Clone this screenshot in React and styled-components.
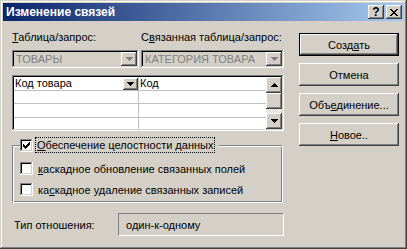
import React from 'react';
import styled, { createGlobalStyle, css } from 'styled-components';

const GlobalStyle = createGlobalStyle`
  html, body {
    margin: 0;
    padding: 0;
    background: #d4d0c8;
  }
  body {
    font-family: "Liberation Sans", Arial, sans-serif;
    font-size: 11px;
    color: #000;
  }
`;

const raised = css`
  background: #d4d0c8;
  box-shadow: inset -1px -1px #404040, inset 1px 1px #fff, inset -2px -2px #808080, inset 2px 2px #d4d0c8;
`;

const sunken = css`
  box-shadow: inset -1px -1px #fff, inset 1px 1px #808080, inset -2px -2px #d4d0c8, inset 2px 2px #000;
`;

const Window = styled.div`
  width: 407px;
  height: 249px;
  box-sizing: border-box;
  padding: 3px;
  background: #d4d0c8;
  box-shadow: inset -1px -1px #404040, inset 1px 1px #d4d0c8, inset -2px -2px #808080, inset 2px 2px #fff;
  display: flex;
  flex-direction: column;
`;

const TitleBar = styled.div`
  height: 18px;
  display: flex;
  align-items: center;
  padding: 0 2px;
  background: linear-gradient(to right, #0a246a, #a6caf0);
`;

const Title = styled.span`
  flex: 1;
  color: #fff;
  font-weight: bold;
  font-size: 12px;
  padding-left: 1px;
`;

const CaptionButtons = styled.div`
  display: flex;
  gap: 2px;
`;

const CaptionButton = styled.div`
  width: 16px;
  height: 14px;
  ${raised};
  display: flex;
  align-items: center;
  justify-content: center;
  font-weight: bold;
  font-size: 12px;
  line-height: 14px;
`;

const Body = styled.div`
  flex: 1;
  display: flex;
  gap: 15px;
  padding: 10px 0 0 9px;
`;

const LeftPane = styled.div`
  width: 272px;
  display: flex;
  flex-direction: column;
`;

const LabelRow = styled.div`
  display: grid;
  grid-template-columns: 129px 1fr;
  height: 13px;
  line-height: 13px;
`;

const ComboRow = styled.div`
  display: flex;
  gap: 2px;
  margin-top: 6px;
`;

const Combo = styled.div`
  width: ${p => p.$w}px;
  height: 18px;
  box-sizing: border-box;
  padding: 2px;
  background: #d4d0c8;
  ${sunken};
  display: flex;
  align-items: center;
  color: #808080;
`;

const ComboText = styled.span`
  flex: 1;
  padding-left: 2px;
  line-height: 14px;
`;

const DropButton = styled.div`
  width: ${p => p.$w || 16}px;
  height: ${p => p.$h || 14}px;
  ${raised};
  display: flex;
  align-items: center;
  justify-content: center;
`;

const Grid = styled.div`
  margin-top: 7px;
  height: 56px;
  box-sizing: border-box;
  padding: 2px;
  background: #fff;
  ${sunken};
  display: flex;
`;

const Rows = styled.div`
  flex: 1;
  display: flex;
  flex-direction: column;
`;

const Row = styled.div`
  display: grid;
  grid-template-columns: 125px 1fr;
  height: ${p => (p.$last ? 12 : 13)}px;
  border-bottom: ${p => (p.$last ? 'none' : '1px solid #c0c0c0')};
`;

const Cell = styled.div`
  display: flex;
  align-items: center;
  padding-left: 1px;
  border-right: ${p => (p.$divider ? '1px solid #c0c0c0' : 'none')};
  line-height: 13px;
  overflow: hidden;
`;

const CellText = styled.span`
  flex: 1;
`;

const ScrollBar = styled.div`
  width: 16px;
  display: flex;
  flex-direction: column;
`;

const ScrollTrack = styled.div`
  flex: 1;
  background: conic-gradient(#fff 25%, #d4d0c8 0 50%, #fff 0 75%, #d4d0c8 0) 0 0 / 2px 2px;
`;

const ScrollButton = styled.div`
  height: 16px;
  ${raised};
  display: flex;
  align-items: center;
  justify-content: center;
`;

const Group = styled.fieldset`
  margin: 7px 0 0 0;
  padding: 9px 0 5px 7px;
  border: 1px solid;
  border-color: #808080 #fff #fff #808080;
  box-shadow: inset 1px 1px #fff, inset -1px -1px #808080;
  width: 271px;
  box-sizing: border-box;
  display: flex;
  flex-direction: column;
  gap: 6px;
`;

const Legend = styled.legend`
  padding: 0 5px 0 0;
  margin: 0;
  background: #d4d0c8;
  height: 14px;
  display: flex;
  align-items: center;
  gap: 3px;
`;

const CheckRow = styled.div`
  height: 15px;
  display: flex;
  align-items: center;
  gap: 5px;
`;

const CheckBox = styled.div`
  width: 13px;
  height: 13px;
  box-sizing: border-box;
  background: #fff;
  ${sunken};
  display: flex;
  align-items: center;
  justify-content: center;
`;

const FocusLabel = styled.span`
  outline: 1px dotted #000;
  padding: 0 1px;
  line-height: 14px;
`;

const RelationRow = styled.div`
  margin-top: 10px;
  display: grid;
  grid-template-columns: 106px 1fr;
  align-items: center;
`;

const RelationLabel = styled.span`
  padding-left: 2px;
`;

const StaticBox = styled.div`
  height: 23px;
  box-sizing: border-box;
  border: 1px solid;
  border-color: #808080 #fff #fff #808080;
  display: flex;
  align-items: center;
  padding-left: 7px;
`;

const RightPane = styled.div`
  display: flex;
  flex-direction: column;
  gap: 7px;
  padding-top: 2px;
`;

const Button = styled.div`
  width: 100px;
  height: 23px;
  box-sizing: border-box;
  ${raised};
  ${p =>
    p.$default &&
    css`
      box-shadow: inset 0 0 0 1px #000, inset -2px -2px #404040, inset 2px 2px #fff, inset -3px -3px #808080;
    `};
  display: flex;
  align-items: center;
  justify-content: center;
`;

const Arrow = ({ dir = 'down', color = '#000' }) => (
  <svg width="7" height="4" viewBox="0 0 7 4" shapeRendering="crispEdges">
    {dir === 'down' ? (
      <polygon points="0,0 7,0 3.5,4" fill={color} />
    ) : (
      <polygon points="3.5,0 7,4 0,4" fill={color} />
    )}
  </svg>
);

const Check = () => (
  <svg width="7" height="7" viewBox="0 0 7 7" shapeRendering="crispEdges">
    <path d="M0 2h1v1h1v1h1V3h1V2h1V1h1V0h1v3H6v1H5v1H4v1H3v1H2V6H1V5H0z" fill="#000" />
  </svg>
);

const CloseGlyph = () => (
  <svg width="8" height="7" viewBox="0 0 8 7" shapeRendering="crispEdges">
    <path d="M0 0h2v1h1v1h2V1h1V0h2v1H7v1H6v1H5v1h1v1h1v1h1v1H6V6H5V5H3v1H2v1H0V6h1V5h1V4h1V3H2V2H1V1H0z" fill="#000" />
  </svg>
);

const U = styled.span`
  text-decoration: underline;
`;

const App = () => (
  <>
    <GlobalStyle />
    <Window>
      <TitleBar>
        <Title>Изменение связей</Title>
        <CaptionButtons>
          <CaptionButton>?</CaptionButton>
          <CaptionButton>
            <CloseGlyph />
          </CaptionButton>
        </CaptionButtons>
      </TitleBar>
      <Body>
        <LeftPane>
          <LabelRow>
            <span>
              <U>Т</U>аблица/запрос:
            </span>
            <span>
              С<U>в</U>язанная таблица/запрос:
            </span>
          </LabelRow>
          <ComboRow>
            <Combo $w={127}>
              <ComboText>ТОВАРЫ</ComboText>
              <DropButton>
                <Arrow color="#808080" />
              </DropButton>
            </Combo>
            <Combo $w={143}>
              <ComboText>КАТЕГОРИЯ ТОВАРА</ComboText>
              <DropButton>
                <Arrow color="#808080" />
              </DropButton>
            </Combo>
          </ComboRow>
          <Grid>
            <Rows>
              <Row>
                <Cell $divider>
                  <CellText>Код товара</CellText>
                  <DropButton $w={15} $h={12}>
                    <Arrow />
                  </DropButton>
                </Cell>
                <Cell>Код</Cell>
              </Row>
              <Row>
                <Cell $divider />
                <Cell />
              </Row>
              <Row>
                <Cell $divider />
                <Cell />
              </Row>
              <Row $last>
                <Cell $divider />
                <Cell />
              </Row>
            </Rows>
            <ScrollBar>
              <ScrollButton>
                <Arrow dir="up" />
              </ScrollButton>
              <ScrollButton />
              <ScrollTrack />
              <ScrollButton>
                <Arrow />
              </ScrollButton>
            </ScrollBar>
          </Grid>
          <Group>
            <Legend>
              <CheckBox>
                <Check />
              </CheckBox>
              <FocusLabel>
                <U>О</U>беспечение целостности данных
              </FocusLabel>
            </Legend>
            <CheckRow>
              <CheckBox />
              <span>
                <U>к</U>аскадное обновление связанных полей
              </span>
            </CheckRow>
            <CheckRow>
              <CheckBox />
              <span>
                ка<U>с</U>кадное удаление связанных записей
              </span>
            </CheckRow>
          </Group>
          <RelationRow>
            <RelationLabel>Тип отношения:</RelationLabel>
            <StaticBox>один-к-одному</StaticBox>
          </RelationRow>
        </LeftPane>
        <RightPane>
          <Button $default>
            <span>
              Созд<U>а</U>ть
            </span>
          </Button>
          <Button>Отмена</Button>
          <Button>
            <span>
              Объ<U>е</U>динение...
            </span>
          </Button>
          <Button>
            <span>
              <U>Н</U>овое..
            </span>
          </Button>
        </RightPane>
      </Body>
    </Window>
  </>
);

export default App;
